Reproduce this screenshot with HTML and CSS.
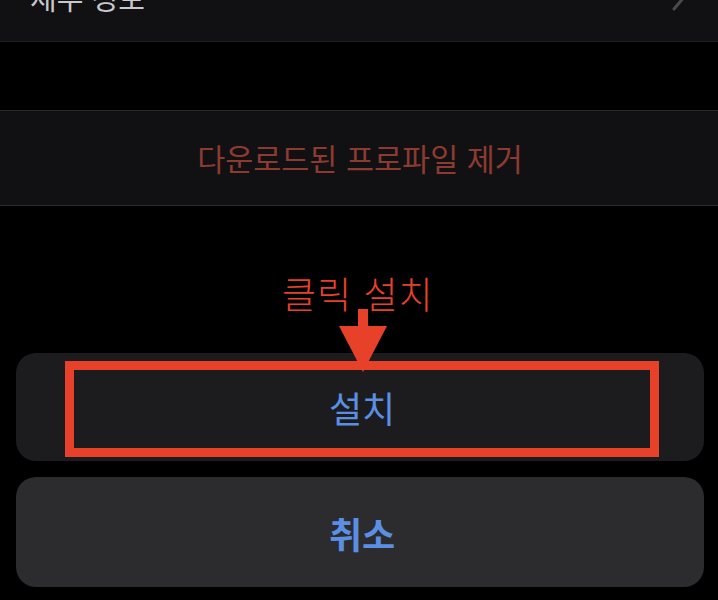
FILE: index.html
```html
<!DOCTYPE html>
<html lang="ko">
<head>
<meta charset="utf-8">
<link rel="stylesheet" href="styles.css">
</head>
<body>
<div class="screen">
  <div class="card-top">
    <div class="row-inner">
      <span class="row-label">세부 정보</span>
      <svg class="chevron" width="16" height="30" viewBox="0 0 16 30"><path d="M2 2 L13 15 L2 28" fill="none" stroke="#4a4a4e" stroke-width="3" stroke-linecap="round" stroke-linejoin="round"/></svg>
    </div>
  </div>
  <div class="card-remove">
    <span class="remove-label">다운로드된 프로파일 제거</span>
  </div>
  <div class="sheet">
    <div class="annotation">
      <span class="anno-text">클릭 설치</span>
      <svg class="anno-arrow" width="50" height="64" viewBox="0 0 50 64"><rect x="20" y="0" width="10" height="18" fill="#e8412a"/><polygon points="1,17 49,17 25,63" fill="#e8412a"/></svg>
    </div>
    <div class="btn btn-install">
      <span class="btn-label">설치</span>
      <div class="highlight"></div>
    </div>
    <div class="btn btn-cancel">
      <span class="btn-label bold">취소</span>
    </div>
  </div>
</div>
</body>
</html>
```

FILE: styles.css
```css
html, body {
  margin: 0;
  padding: 0;
  background: #000;
}
body {
  font-family: "Noto Sans CJK KR", "Noto Sans", sans-serif;
  width: 718px;
  height: 600px;
  overflow: hidden;
}
.screen {
  display: flex;
  flex-direction: column;
}
.card-top {
  height: 41px;
  overflow: hidden;
  background: #111113;
  border-bottom: 1px solid #1e1e20;
}
.row-inner {
  height: 60px;
  margin-top: -33px;
  display: flex;
  align-items: center;
  justify-content: space-between;
  padding: 0 30px 0 30px;
}
.row-label {
  font-size: 29px;
  color: #c9c9cc;
  line-height: 1;
}
.chevron {
  margin-top: -2px;
}
.card-remove {
  margin-top: 68px;
  height: 94px;
  background: #111113;
  border-top: 1px solid #2a2a2c;
  border-bottom: 1px solid #2a2a2c;
  display: flex;
  align-items: center;
  justify-content: center;
}
.remove-label {
  font-size: 30.5px;
  color: #8d3a31;
  line-height: 1;
  margin-top: 0;
  margin-left: 2px;
}
.sheet {
  position: relative;
  padding: 147px 14px 0 16px;
  display: flex;
  flex-direction: column;
  gap: 16px;
}
.annotation {
  position: absolute;
  left: 282px;
  top: 69px;
  width: 170px;
  display: flex;
  flex-direction: column;
  align-items: flex-start;
  z-index: 2;
}
.anno-text {
  font-size: 37px;
  font-weight: 300;
  color: #e8412a;
  line-height: 1;
  letter-spacing: 1px;
}
.anno-arrow {
  margin-top: -3px;
  margin-left: 56px;
}
.btn {
  position: relative;
  height: 108px;
  border-radius: 20px;
  display: flex;
  align-items: center;
  justify-content: center;
}
.btn-install {
  background: #1c1c1e;
}
.btn-cancel {
  background: #2c2c2e;
  height: 110px;
}
.btn-label {
  font-size: 36px;
  color: #5b8fe3;
  line-height: 1;
  margin-left: 4px;
}
.btn-label.bold {
  font-weight: 700;
  margin-top: 2px;
}
.highlight {
  position: absolute;
  left: 49px;
  top: 8px;
  width: 576px;
  height: 78px;
  border: 9px solid #e8412a;
}
```
